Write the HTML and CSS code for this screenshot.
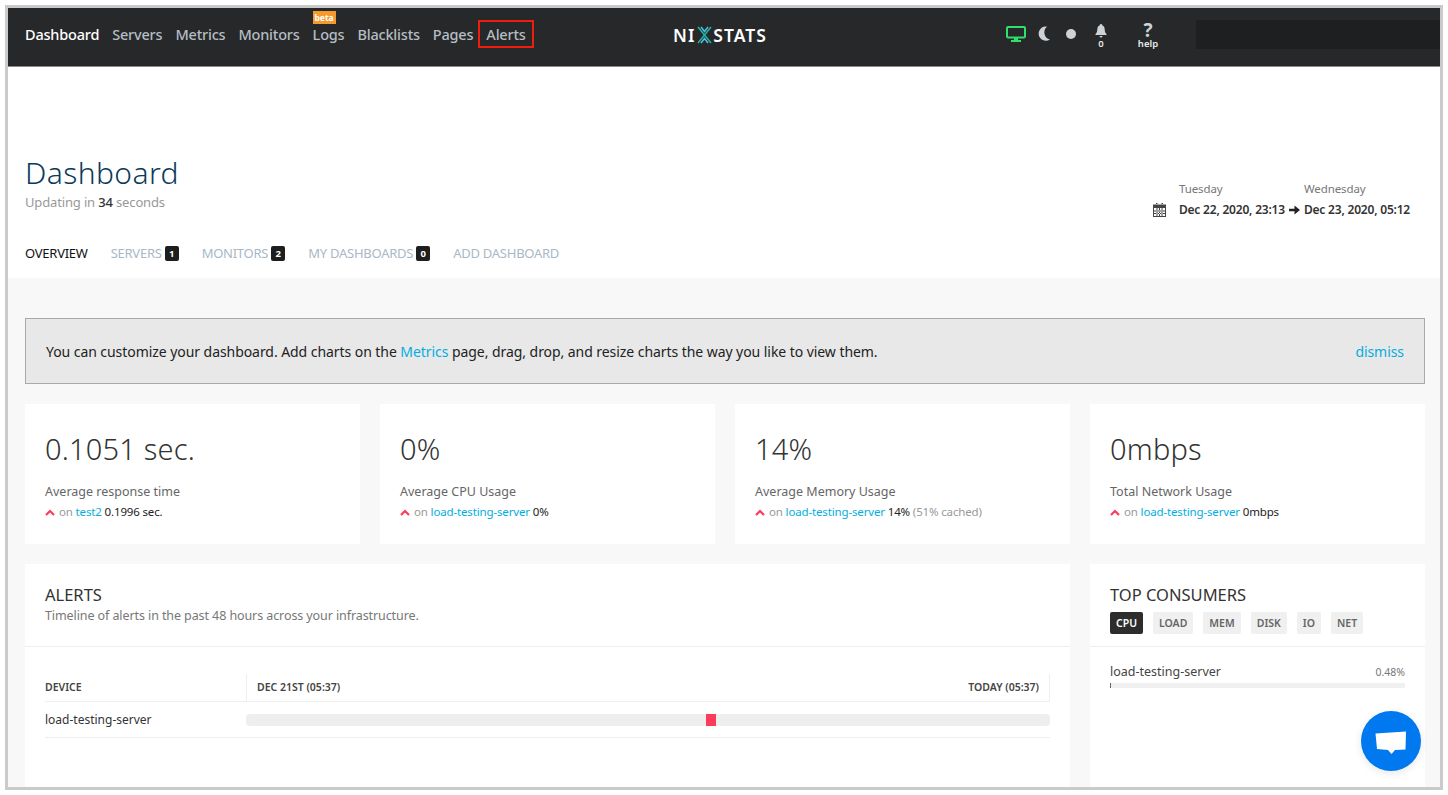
FILE: index.html
```html
<!DOCTYPE html>
<html lang="en">
<head>
<meta charset="utf-8">
<title>Dashboard</title>
<link rel="stylesheet" href="styles.css">
</head>
<body>
<div class="frame">
  <header class="topbar">
    <nav class="mainnav">
      <a class="nav-link active">Dashboard</a>
      <a class="nav-link">Servers</a>
      <a class="nav-link">Metrics</a>
      <a class="nav-link">Monitors</a>
      <a class="nav-link logs">Logs<span class="beta">beta</span></a>
      <a class="nav-link">Blacklists</a>
      <a class="nav-link">Pages</a>
      <a class="nav-link alerts-link">Alerts</a>
    </nav>
    <div class="logo">NI<svg class="logo-x" width="17" height="18" viewBox="0 0 17 18"><path d="M2 1 8.5 9 2 17M15 1 8.5 9 15 17" fill="none" stroke="#1fb5a8" stroke-width="1.5"/><path d="M5 1 8.5 5.5 12 1M5 17 8.5 12.5 12 17" fill="none" stroke="#4cc3e0" stroke-width="1.5"/></svg>STATS</div>
    <div class="tools">
      <svg class="tool-monitor" width="20" height="16" viewBox="0 0 20 16"><rect x="1" y="1" width="18" height="10.5" rx="1" fill="none" stroke="#2fe06a" stroke-width="2"/><rect x="8" y="12" width="4" height="2" fill="#2fe06a"/><rect x="5" y="14" width="10" height="2" fill="#2fe06a"/></svg>
      <svg class="tool-moon" width="14" height="15" viewBox="0 0 14 15"><path d="M10 0.5A7.2 7.2 0 1 0 13 13.5 7.5 7.5 0 0 1 10 0.5Z" fill="#cdd2d6"/></svg>
      <span class="tool-dot"></span>
      <div class="tool-stack bell">
        <svg width="12" height="14" viewBox="0 0 12 14"><path d="M6 0a1.2 1.2 0 0 1 1.2 1.3C9 2 9.6 3.4 9.7 5.5c.1 2.400.7 3.300 1.800 4.500v1H.5v-1c1.100-1.200 1.700-2.100 1.800-4.500C2.400 3.400 3 2 4.800 1.300A1.200 1.200 0 0 1 6 0ZM4.500 12h3a1.500 1.500 0 0 1-3 0Z" fill="#cdd2d6"/></svg>
        <span class="tool-label">0</span>
      </div>
      <div class="tool-stack help">
        <span class="qmark">?</span>
        <span class="tool-label">help</span>
      </div>
      <div class="searchbox"></div>
    </div>
  </header>

  <section class="pagehead">
    <div class="head-row">
      <div>
        <h1>Dashboard</h1>
        <p class="updating">Updating in <b>34</b> seconds</p>
      </div>
      <div class="daterange">
        <svg class="cal" width="13" height="14" viewBox="0 0 13 14"><path d="M3 0h1.500v2H3zM8.500 0H10v2H8.500zM0 1.500h13V14H0zM1 5v8h11V5zM1 7.500h11v1H1zM1 10h11v1H1zM3.500 5h1v8h-1zM6 5h1v8H6zM8.500 5h1v8h-1z" fill="#444" fill-rule="evenodd"/></svg>
        <div class="date-col">
          <span class="day">Tuesday</span>
          <span class="stamp">Dec 22, 2020, 23:13</span>
        </div>
        <svg class="arrow" width="11" height="10" viewBox="0 0 11 10"><path d="M0 3.700h5.500V.5L11 5 5.500 9.500V6.300H0Z" fill="#222"/></svg>
        <div class="date-col">
          <span class="day">Wednesday</span>
          <span class="stamp">Dec 23, 2020, 05:12</span>
        </div>
      </div>
    </div>
    <nav class="tabs">
      <a class="tab current">OVERVIEW</a>
      <a class="tab">SERVERS<span class="count">1</span></a>
      <a class="tab">MONITORS<span class="count">2</span></a>
      <a class="tab">MY DASHBOARDS<span class="count">0</span></a>
      <a class="tab">ADD DASHBOARD</a>
    </nav>
  </section>

  <main class="content">
    <div class="notice">
      <span>You can customize your dashboard. Add charts on the <a class="link">Metrics</a> page, drag, drop, and resize charts the way you like to view them.</span>
      <a class="link">dismiss</a>
    </div>

    <div class="stats">
      <article class="stat">
        <div class="stat-value">0.1051 sec.</div>
        <div class="stat-label">Average response time</div>
        <div class="stat-detail"><svg class="chev" width="10" height="7" viewBox="0 0 10 7"><path d="M1 6 5 2l4 4" fill="none" stroke="#ff3b5c" stroke-width="2.200"/></svg><span class="muted">on</span> <a class="link">test2</a> 0.1996 sec.</div>
      </article>
      <article class="stat">
        <div class="stat-value">0%</div>
        <div class="stat-label">Average CPU Usage</div>
        <div class="stat-detail"><svg class="chev" width="10" height="7" viewBox="0 0 10 7"><path d="M1 6 5 2l4 4" fill="none" stroke="#ff3b5c" stroke-width="2.200"/></svg><span class="muted">on</span> <a class="link">load-testing-server</a> 0%</div>
      </article>
      <article class="stat">
        <div class="stat-value">14%</div>
        <div class="stat-label">Average Memory Usage</div>
        <div class="stat-detail"><svg class="chev" width="10" height="7" viewBox="0 0 10 7"><path d="M1 6 5 2l4 4" fill="none" stroke="#ff3b5c" stroke-width="2.200"/></svg><span class="muted">on</span> <a class="link">load-testing-server</a> 14% <span class="muted">(51% cached)</span></div>
      </article>
      <article class="stat">
        <div class="stat-value">0mbps</div>
        <div class="stat-label">Total Network Usage</div>
        <div class="stat-detail"><svg class="chev" width="10" height="7" viewBox="0 0 10 7"><path d="M1 6 5 2l4 4" fill="none" stroke="#ff3b5c" stroke-width="2.200"/></svg><span class="muted">on</span> <a class="link">load-testing-server</a> 0mbps</div>
      </article>
    </div>

    <div class="panels">
      <section class="panel alerts">
        <div class="panel-head">
          <h2>ALERTS</h2>
          <p class="panel-sub">Timeline of alerts in the past 48 hours across your infrastructure.</p>
        </div>
        <div class="timeline">
          <div class="tl-head">
            <div class="tl-device">DEVICE</div>
            <div class="tl-range"><span>DEC 21ST (05:37)</span><span>TODAY (05:37)</span></div>
          </div>
          <div class="tl-row">
            <div class="tl-name">load-testing-server</div>
            <div class="tl-track"><span class="tl-mark"></span></div>
          </div>
        </div>
      </section>
      <section class="panel consumers">
        <div class="cons-head">
          <h2>TOP CONSUMERS</h2>
          <div class="pills">
            <span class="pill on">CPU</span>
            <span class="pill">LOAD</span>
            <span class="pill">MEM</span>
            <span class="pill">DISK</span>
            <span class="pill">IO</span>
            <span class="pill">NET</span>
          </div>
        </div>
        <div class="cons-body">
          <div class="cons-row"><span>load-testing-server</span><span class="pct">0.48%</span></div>
          <div class="cons-bar"><span class="cons-fill"></span></div>
        </div>
      </section>
    </div>
  </main>

  <button class="chat" type="button" aria-label="Chat">
    <svg width="32" height="24" viewBox="0 0 32 24"><path d="M0.500 2.500 31 0.500l-.500 18-10.500 .500-3.500 4-3.500-4L2 18Z" fill="#fff"/></svg>
  </button>
</div>
</body>
</html>
```

FILE: styles.css
```css
* { box-sizing: border-box; }
html, body { margin: 0; padding: 0; background: #fff; }
body {
  height: 795px;
  overflow: hidden;
  padding: 5px;
  font-family: "Noto Sans", "Open Sans", sans-serif;
  color: #333;
}
a { text-decoration: none; }
.frame {
  position: relative;
  width: 1438px;
  height: 785px;
  border: 3px solid #cacaca;
  overflow: hidden;
  background: #f8f8f8;
}

/* top bar */
.topbar {
  position: relative;
  height: 59px;
  background: #27282a;
  border-bottom: 1px solid #8a8a8a;
  display: flex;
  align-items: flex-start;
}
.mainnav {
  display: flex;
  gap: 13px;
  padding: 16px 0 0 17px;
  width: 665px;
  font-size: 14.500px;
  font-weight: 500;
  line-height: 20px;
  letter-spacing: -0.200px;
}
.nav-link { color: #b5bdc2; position: relative; white-space: nowrap; }
.nav-link.active { color: #fff; }
.beta {
  position: absolute;
  left: 0;
  top: -13px;
  width: 23px;
  height: 13px;
  background: #f79a2e;
  color: #fff;
  font-size: 8.500px;
  font-weight: 700;
  line-height: 13px;
  text-align: center;
  letter-spacing: 0;
}
.alerts-link::after {
  content: "";
  position: absolute;
  left: -8px;
  right: -8px;
  top: -4px;
  bottom: -4px;
  border: 2px solid #f01d0e;
}
.logo {
  display: flex;
  align-items: center;
  width: 333px;
  padding-top: 17px;
  color: #fff;
  font-size: 17.500px;
  font-weight: 600;
  line-height: 18px;
  letter-spacing: 1px;
  height: 36px;
}
.logo-x { margin: 0 0 0 1px; }
.tools { display: flex; align-items: flex-start; flex: 1; }
.tool-monitor { margin: 18px 0 0 0; }
.tool-moon { margin: 18px 0 0 11px; }
.tool-dot {
  width: 10px;
  height: 10px;
  border-radius: 50%;
  background: #cdd2d6;
  margin: 21px 0 0 15px;
}
.tool-stack { display: flex; flex-direction: column; align-items: center; }
.bell { margin: 16px 0 0 19px; width: 12px; }
.help { margin: 13px 0 0 30px; width: 22px; }
.qmark { color: #cdd2d6; font-size: 19px; font-weight: 700; line-height: 19px; }
.tool-label { color: #e6e8ea; font-size: 9.500px; font-weight: 600; line-height: 11px; }
.help .tool-label { margin-top: -2px; }
.searchbox { width: 244px; height: 29px; background: #1e1f20; margin: 12px 0 0 auto; }

/* page head */
.pagehead { background: #fff; height: 211px; padding: 88px 0 0 17px; }
.head-row { display: flex; justify-content: space-between; height: 0; }
h1 {
  margin: 0;
  font-size: 30px;
  font-weight: 300;
  line-height: 36px;
  color: #0c3b5a;
  letter-spacing: 0.400px;
}
.updating { margin: 2px 0 0; font-size: 13px; line-height: 18px; color: #999; letter-spacing: -0.150px; }
.updating b { color: #333; font-weight: 500; }
.daterange { display: flex; align-items: flex-end; padding: 23px 30px 0 0; height: 63px; font-size: 12px; }
.cal { margin: 0 13px 1px 0; }
.date-col { display: flex; flex-direction: column; }
.day { color: #777; font-size: 11.500px; line-height: 17px; margin-bottom: 5px; letter-spacing: -0.100px; }
.stamp { color: #333; font-weight: 600; line-height: 16px; white-space: nowrap; font-size: 12px; letter-spacing: -0.200px; }
.arrow { margin: 0 4px 3px 4px; }
.tabs {
  display: flex;
  gap: 23px;
  margin-top: 89px;
  font-size: 13px;
  line-height: 18px;
  letter-spacing: -0.250px;
}
.tab { color: #a9b8c6; white-space: nowrap; display: flex; align-items: center; }
.tab.current { color: #111; }
.count {
  display: inline-block;
  width: 14px;
  height: 15px;
  margin-left: 3px;
  border-radius: 2px;
  background: #1e1e1e;
  color: #fff;
  font-size: 9.500px;
  font-weight: 700;
  line-height: 15px;
  text-align: center;
  letter-spacing: 0;
}

/* content */
.content { padding: 40px 15px 0 17px; }
.notice {
  display: flex;
  justify-content: space-between;
  align-items: center;
  height: 66px;
  padding: 0 20px;
  background: #e8e8e8;
  border: 1px solid #a9a9a9;
  font-size: 14px;
  color: #222;
  letter-spacing: -0.060px;
}
.link { color: #02aee0; }
.stats { display: grid; grid-template-columns: repeat(4, 335px); gap: 20px; margin-top: 20px; }
.stat { background: #fff; height: 140px; padding: 26px 20px 0; }
.stat-value { font-size: 29px; font-weight: 300; line-height: 38px; color: #333; letter-spacing: 0.200px; }
.stat-label { margin-top: 15px; font-size: 12.500px; line-height: 18px; color: #666; }
.stat-detail { margin-top: 2px; font-size: 11.500px; line-height: 17px; color: #222; letter-spacing: -0.150px; }
.chev { margin-right: 4px; }
.muted { color: #999; }

.panels { display: grid; grid-template-columns: 1045px 335px; gap: 20px; margin-top: 20px; }
.panel { background: #fff; height: 300px; }
.panel-head { padding: 21px 20px 0; height: 83px; border-bottom: 1px solid #eee; }
h2 { margin: 0; font-size: 16.500px; font-weight: 400; line-height: 20px; color: #333; }
.panel-sub { margin: 2px 0 0; font-size: 12.500px; line-height: 18px; color: #777; letter-spacing: -0.090px; }
.timeline { padding: 0 20px; }
.tl-head {
  display: flex;
  height: 28px;
  margin-top: 27px;
  border-bottom: 1px solid #eee;
  font-size: 10.500px;
  font-weight: 600;
  color: #444;
  line-height: 27px;
}
.tl-device { width: 201px; }
.tl-range {
  flex: 1;
  display: flex;
  justify-content: space-between;
  padding: 0 10px;
  border-left: 1px solid #eee;
  border-right: 1px solid #eee;
}
.tl-row { display: flex; align-items: center; height: 36px; border-bottom: 1px solid #eee; font-size: 12px; color: #333; }
.tl-name { width: 201px; }
.tl-track { position: relative; flex: 1; height: 12px; background: #eee; border-radius: 4px; }
.tl-mark { position: absolute; left: 460px; top: 0; width: 10px; height: 12px; background: #ff3b5c; }

.cons-head { height: 83px; padding: 21px 20px 0; border-bottom: 1px solid #eee; }
.pills { display: flex; gap: 10px; margin-top: 7px; }
.pill {
  height: 22px;
  padding: 0 6px;
  border-radius: 2px;
  background: #f0f0f0;
  color: #666;
  font-size: 10.500px;
  font-weight: 600;
  line-height: 22px;
}
.pill.on { background: #2d2d2d; color: #fff; }
.cons-body { padding: 16px 20px 0; }
.cons-row { display: flex; justify-content: space-between; align-items: center; font-size: 12.500px; line-height: 18px; color: #444; }
.pct { font-size: 10.500px; color: #777; }
.cons-bar { height: 5px; margin-top: 2px; background: #f0f0f0; }
.cons-fill { display: block; width: 1px; height: 5px; background: #666; }

.chat {
  position: absolute;
  left: 1353px;
  top: 703px;
  width: 60px;
  height: 60px;
  padding: 4px 0 0;
  border: 0;
  border-radius: 50%;
  background: #0078f0;
  box-shadow: 0 2px 8px rgba(0,0,0,.1);
  display: flex;
  align-items: center;
  justify-content: center;
}
```
